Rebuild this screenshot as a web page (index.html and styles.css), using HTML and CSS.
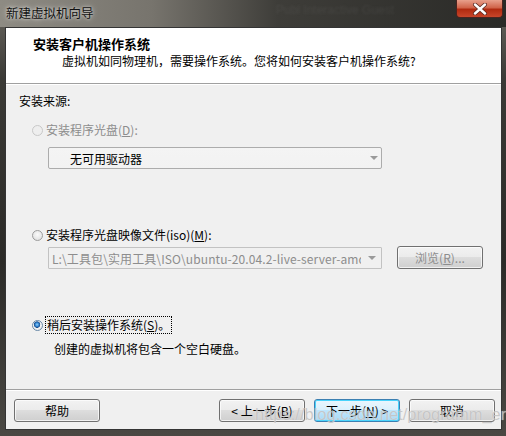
FILE: index.html
```html
<!DOCTYPE html>
<html lang="zh">
<head>
<meta charset="utf-8">
<link rel="stylesheet" href="styles.css">
</head>
<body>
<div class="frame">
  <div class="titlebar">
    <span class="title">新建虚拟机向导</span>
    <span class="ghost">Publ  Interactive  Guest</span>
    <div class="close"><svg width="16" height="12" viewBox="0 0 16 12"><path d="M3 1.5 L13 10.5 M13 1.5 L3 10.5" stroke="#5a2a22" stroke-width="4" stroke-linecap="round"/><path d="M3 1.5 L13 10.5 M13 1.5 L3 10.5" stroke="#fff" stroke-width="2.4" stroke-linecap="round"/></svg></div>
  </div>
  <div class="window">
    <div class="header">
      <div class="h-title">安装客户机操作系统</div>
      <div class="h-sub">虚拟机如同物理机，需要操作系统。您将如何安装客户机操作系统?</div>
    </div>
    <div class="body">
      <div class="label">安装来源:</div>
      <div class="radio-row r1 disabled"><span class="radio"></span><span>安装程序光盘(<u>D</u>):</span></div>
      <div class="combo c1"><span class="combo-text dark">无可用驱动器</span><span class="arrow"></span></div>
      <div class="radio-row r2"><span class="radio"></span><span>安装程序光盘映像文件(iso)(<u>M</u>):</span></div>
      <div class="iso-row">
        <div class="combo c2"><span class="combo-text path">L:\工具包\实用工具\ISO\ubuntu-20.04.2-live-server-amd64.iso</span><span class="arrow"></span></div>
        <div class="btn browse">浏览(<u>R</u>)...</div>
      </div>
      <div class="radio-row r3"><span class="radio checked"></span><span class="focus">稍后安装操作系统(<u>S</u>)。</span></div>
      <div class="desc">创建的虚拟机将包含一个空白硬盘。</div>
    </div>
    <div class="footer">
      <div class="btn">帮助</div>
      <div class="spacer"></div>
      <div class="btn">&lt; 上一步(<u>B</u>)</div>
      <div class="btn default">下一步(<u>N</u>) &gt;</div>
      <div class="btn">取消</div>
    </div>
  </div>
  <div class="watermark">https://blog.csdn.net/programm_er</div>
</div>
</body>
</html>
```
FILE: styles.css
```css
html, body { margin: 0; padding: 0; }
body {
  width: 506px; height: 436px; overflow: hidden;
  font-family: "Noto Sans CJK SC", "Liberation Sans", sans-serif;
  font-size: 12px; color: #000;
  background: linear-gradient(180deg, #6d6a63 0%, #3b3a36 18%, #2b2a27 60%, #4a4843 100%);
}
.frame { position: relative; width: 506px; height: 436px; overflow: hidden; }
.titlebar {
  height: 27px; position: relative; display: flex; align-items: center;
  background: linear-gradient(90deg, #8e8b83 0%, #77746d 30%, #3e3d39 55%, #2a2a27 100%);
}
.title {
  margin-left: 6px; font-size: 12.5px; color: #111;
  text-shadow: 0 0 6px rgba(255,255,255,.6), 0 0 3px rgba(255,255,255,.6);
  position: relative; top: -1px;
}
.ghost {
  position: absolute; left: 276px; top: 3px; color: rgba(160,160,160,.12);
  font-family: "Liberation Sans", sans-serif; font-size: 12px; filter: blur(1px);
}
.close {
  position: absolute; left: 456px; top: 0; width: 47px; height: 18px;
  border: 1px solid #4a2420; border-top: none; border-radius: 0 0 4px 4px;
  background: linear-gradient(180deg, #e8a08c 0%, #d0644a 45%, #b02a10 55%, #c8462a 100%);
  box-sizing: border-box; display: flex; align-items: center; justify-content: center;
}
.window {
  margin-left: 5px; width: 497px; height: 403px; box-sizing: border-box;
  border: 1px solid #343434; background: #f0f0f0;
  display: flex; flex-direction: column;
}
.header {
  height: 56px; background: #fff; box-sizing: border-box;
  border-bottom: 1px solid #a0a0a0; box-shadow: 0 1px 0 #fff;
  padding: 7px 0 0 27px;
}
.h-title { font-weight: bold; font-size: 13px; line-height: 18px; }
.h-sub { margin-left: 29px; line-height: 18px; margin-top: -1px; }
.body { flex: 1; padding: 0 0 0 13px; position: relative; }
.label { margin-top: 9px; line-height: 16px; }
.radio-row { display: flex; align-items: center; line-height: 16px; margin-left: 13px; }
.radio-row .radio { margin-right: 3px; }
.r1 { margin-top: 13px; }
.r2 { margin-top: 58px; color: #000; }
.r3 { margin-top: 48px; }
.disabled { color: #8d8d8d; }
.radio {
  width: 11px; height: 11px; border-radius: 50%; box-sizing: border-box;
  border: 1px solid #9c9c9c;
  background: radial-gradient(circle at 50% 40%, #fafafa 0%, #e4e4e4 70%, #d0d0d0 100%);
  display: inline-block; flex: none;
}
.disabled .radio { border-color: #c8c8c8; background: #eeeeee; }
.radio.checked {
  border-color: #6a8aa8;
  background: radial-gradient(circle at 45% 40%, #8fd0ff 0%, #2a7cc8 28%, #1e4e8c 40%, #f4f4f4 48%, #e8e8e8 80%, #d8d8d8 100%);
}
.focus { outline: 1px dotted #000; outline-offset: 0px; padding: 0 1px; }
.combo {
  box-sizing: border-box; height: 22px; border: 1px solid #acacac; border-radius: 2px;
  background: linear-gradient(#f4f4f4, #f2f2f2);
  display: flex; align-items: center; position: relative; overflow: hidden;
}
.c1 { margin: 9px 0 0 29px; width: 334px; }
.combo-text { white-space: nowrap; overflow: hidden; }
.combo-text.dark { padding-left: 21px; }
.arrow {
  position: absolute; right: 3px; top: 8px; width: 0; height: 0;
  border-left: 4px solid transparent; border-right: 4px solid transparent;
  border-top: 4px solid #9a9a9a;
}
.c2 .arrow { right: 5px; }
.iso-row { display: flex; margin: 4px 0 0 29px; align-items: flex-start; }
.c2 {
  width: 334px; border: 1px solid #c2c2c2; border-radius: 1px; height: 22px;
  background: #f0f0f0;
}
.combo-text.path {
  color: #8d8d8d; padding-left: 3px; width: 309px; letter-spacing: 0.1px;
  background: #f0f0f0;
}
.browse { margin-left: 15px; margin-top: -1px; width: 89px; color: #8d8d8d; background: #f4f4f4; border-color: #adb2b5; }
.desc { margin: 8px 0 0 35px; line-height: 16px; }
.footer {
  height: 40px; box-sizing: border-box; border-top: 1px solid #a0a0a0; box-shadow: inset 0 1px 0 #fff;
  display: flex; align-items: flex-start; padding: 9px 0 0 8px; gap: 9px;
}
.spacer { width: 101px; }
.btn {
  box-sizing: border-box; width: 86px; height: 23px; border: 1px solid #707070; border-radius: 3px;
  background: linear-gradient(180deg, #f2f2f2 0%, #ebebeb 49%, #dddddd 50%, #cfcfcf 100%);
  display: flex; align-items: center; justify-content: center; line-height: 16px;
  box-shadow: inset 0 0 0 1px rgba(255,255,255,.7);
}
.btn.default {
  border-color: #3c7fb1;
  background: linear-gradient(180deg, #eaf6fd 0%, #d9f0fc 49%, #bee6fd 50%, #a7d9f5 100%);
  box-shadow: inset 0 0 0 1px #48d3fb;
}
.watermark {
  position: absolute; left: 255px; top: 405px; font-family: "Liberation Sans", sans-serif;
  font-size: 16.5px; color: rgba(185,185,185,.75); pointer-events: none; white-space: nowrap;
  text-shadow: 0 0 1px rgba(255,255,255,.6);
}
```
